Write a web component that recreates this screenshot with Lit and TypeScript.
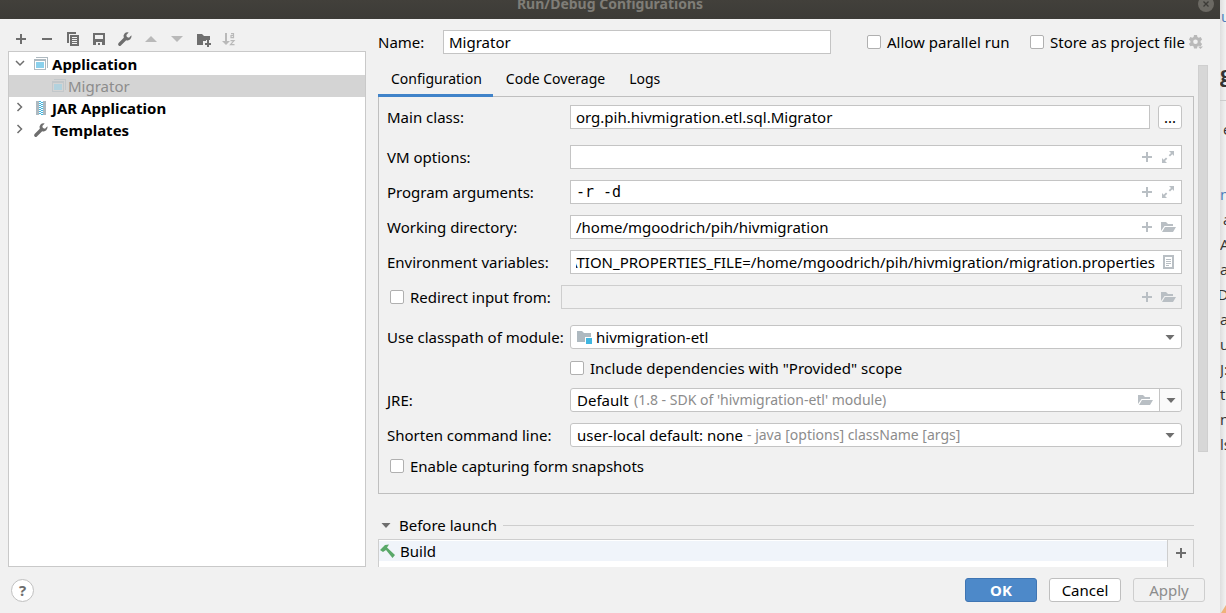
import { LitElement, html, css, svg, nothing } from "lit";
import { customElement, state } from "lit/decorators.js";
import { classMap } from "lit/directives/class-map.js";

const shapes: Record<string, unknown> = {
  add: svg`<path d="M7 3h2v4h4v2H9v4H7V9H3V7h4z"/>`,
  remove: svg`<path d="M3 7h10v2H3z"/>`,
  copy: svg`<path d="M2 1h9v2H4v9H2z"/><path fill-rule="evenodd" d="M5 4h9v11H5zM7 6v1h5V6zM7 8v1h5V8zM7 10v1h5v-1zM7 12v1h5v-1z"/>`,
  save: svg`<path fill-rule="evenodd" d="M2 2h12v12H2zM4 4v4h8V4zM5 11v3h2v-2h2v2h2v-3z"/>`,
  wrench: svg`<path d="M14.4 4.3 12 6.7 9.9 6l-.6-2.1L11.700 1.500A4 4 0 0 0 6.800 6.800L1.600 12.100a1.600 1.600 0 0 0 2.300 2.300L9.200 9.200a4 4 0 0 0 5.200-4.900z"/>`,
  up: svg`<path d="M2 11h12L8 5z"/>`,
  down: svg`<path d="M2 5h12l-6 6z"/>`,
  folderAdd: svg`<path d="M2 3h5l2 2h6v4h-4v1H8v4H2z"/><path d="M12 9h2v3h2v2h-2v2h-2v-2h-2v-2h2z"/>`,
  sort: svg`<path d="M4 2h2v8h3l-4 4-4-4h3z"/><path fill="none" stroke="currentColor" stroke-width="1.200" d="M10 2.600h2.500v4H10V4.500h2.500M9.500 9.600h3.500l-3.500 4h4"/>`,
  expand: svg`<path d="M9 2h5v5l-1.700-1.700-2.300 2.200-1.300-1.300L11 4zM2 9l1.700 1.700L6 8.500l1.300 1.300L5 12l2 2H2z"/>`,
  folder: svg`<path d="M1 3h5l2 2h5v2H4.500L1 12z"/><path d="M5 8h11l-3 5H2z"/>`,
  list: svg`<path fill-rule="evenodd" d="M3 1h11v14H3zM5 3v10h7V3z"/><path d="M6 5h5v1H6zM6 7h5v1H6zM6 9h5v1H6zM6 11h3v1H6z"/>`,
  app: svg`<path fill="#aeb9c0" d="M3 1h12v11h-1V2H3z"/><path fill="#aeb9c0" fill-rule="evenodd" d="M1 3h12v11H1zM2 5v8h10V5z"/><path fill="#8ad0ec" d="M3 6h8v6H3z"/>`,
  jar: svg`<path fill="#aeb9c0" d="M3 1h3v14H3zM10 1h3v14h-3z"/><path stroke="#40b6e0" stroke-width="2" stroke-dasharray="1 1" d="M7 1v14"/><path stroke="#40b6e0" stroke-width="2" stroke-dasharray="1 1" stroke-dashoffset="1" d="M9 1v14"/>`,
  module: svg`<path fill="#aeb9c0" d="M1 2h5l2 2h7v4H9v5H1z"/><path fill="#40b6e0" d="M10 9h6v6h-6z"/>`,
  hammer: svg`<path fill="#59a869" d="M0 7l5-5 4-.5-2 3L15 12l-2.500 3L6 7 3 9z"/>`,
  gear: svg`<path fill-rule="evenodd" d="M5 1h3l.4 2 1.300.8 2-.7 1.400 2.500L11.600 7v1.600l1.500 1.300-1.400 2.400-2-.6-1.300.8L8 14.500H5l-.4-2-1.300-.8-2 .6L-.1 9.900l1.500-1.300V7L-.1 5.600l1.400-2.500 2 .7 1.300-.8zM6.500 5.500a2.300 2.300 0 1 0 0 4.600 2.300 2.300 0 0 0 0-4.600z"/><path d="M9 12.500h5L11.500 15z"/>`,
  arrow: svg`<path d="M3.500 6h9L8 11z"/>`,
  open: svg`<path fill="none" stroke="currentColor" stroke-width="1.500" d="M4 5l4 4 4-4"/>`,
  closed: svg`<path fill="none" stroke="currentColor" stroke-width="1.500" d="M5.500 3l4 4-4 4"/>`,
  close: svg`<circle cx="8" cy="8" r="8" fill="#6b6963"/><path stroke="#3c3b37" stroke-width="1.300" d="M5.500 5.500l5 5M10.500 5.500l-5 5"/>`,
};

const icon = (name: string, cls = "") =>
  html`<svg class="icon ${cls}" viewBox="0 0 16 16" width="16" height="16" fill="currentColor" aria-hidden="true">${shapes[name]}</svg>`;

@customElement("app-root")
export class AppRoot extends LitElement {
  @state() private tab = "Configuration";

  static styles = css`
    :host {
      display: flex;
      height: 100vh;
      overflow: hidden;
      background: #f1f1f1;
      color: #000;
      font: 15px/20px "Noto Sans", sans-serif;
    }
    * { box-sizing: border-box; }
    button, input, select { font: inherit; color: inherit; margin: 0; }
    button { padding: 0; border: 0; background: none; display: flex; align-items: center; justify-content: center; }
    .icon { display: block; flex: none; }
    .dialog { flex: 1; min-width: 0; display: flex; flex-direction: column; }
    .title {
      height: 19px; flex: none; display: grid; grid-template-columns: 28px 1fr 28px;
      background: linear-gradient(#42403b, #3c3b37); color: #7f7d77; overflow: hidden;
    }
    .title h1 { margin: 0; grid-column: 2; text-align: center; font-size: 14px; line-height: 8px; font-weight: 700; }
    .title button { height: 8px; }
    .main { flex: 1; min-height: 0; display: grid; grid-template-columns: 358px minmax(0, 1fr); gap: 12px; padding-left: 8px; }
    .side { display: flex; flex-direction: column; min-height: 0; }
    .tools { display: flex; height: 32px; padding-top: 8px; color: #6e6e6e; }
    .tools button { width: 26px; height: 24px; }
    .tools button:disabled { color: #b9b9b9; }
    .tree { flex: 1; margin: 0; padding: 1px 0; list-style: none; background: #fff; border: 1px solid #c9c9c9; }
    .node { display: flex; align-items: center; height: 22px; padding-left: 3px; font-weight: 700; color: #000; }
    .node .icon { color: #6e6e6e; margin-right: 5px; }
    .node .icon + .icon { margin-right: 3px; }
    .node.child { padding-left: 42px; background: #d4d4d4; color: #8c8c8c; font-weight: 400; }
    .node.child .icon { margin-right: 1px; opacity: 0.45; }
    .editor { display: flex; flex-direction: column; min-width: 0; min-height: 0; }
    .namebar { height: 46px; flex: none; display: grid; grid-template-columns: 65px minmax(0, 1fr) 163px 159px 16px; align-items: center; padding-right: 15px; }
    .namebar .text { margin-right: 36px; }
    .namebar .icon { color: #b9b9b9; }
    .text {
      height: 24px; min-width: 0; background: #fff; border: 1px solid #c4c4c4; padding: 0 5px; outline: none;
    }
    .check { display: flex; align-items: center; gap: 6px; height: 24px; white-space: nowrap; }
    .box { appearance: none; width: 14px; height: 14px; flex: none; background: #fff; border: 1px solid #b0b0b0; border-radius: 2px; }
    .box:checked { background: #4a88c7; }
    .scroll { flex: 1; min-height: 0; display: grid; grid-template-columns: minmax(0, 1fr) 10px; gap: 4px; padding-right: 12px; overflow: hidden; }
    .thumb { height: 387px; background: #d7d7d7; border: 1px solid #cfcfcf; }
    .tabs { display: flex; height: 31px; font-size: 14px; }
    .tabs button { height: 32px; padding: 0 11px 2px 13px; border-bottom: 3px solid transparent; }
    .tabs button.active { border-color: #4083c9; position: relative; }
    .panel { border: 1px solid #bfbfbf; padding: 8px 11px 15px 8px; display: flex; flex-direction: column; }
    .group { display: grid; gap: 11px; margin: 16px 0; }
    .row { display: grid; grid-template-columns: 183px minmax(0, 1fr); align-items: center; white-space: nowrap; }
    .row.narrow { grid-template-columns: 174px minmax(0, 1fr); }
    .row.wide { grid-template-columns: 183px minmax(0, 1fr) 24px; }
    .row.wide .text { margin-right: 8px; }
    .inset { padding-left: 3px; }
    .more { height: 24px; background: #fff; border: 1px solid #c4c4c4; border-radius: 3px; }
    .field { display: flex; align-items: center; height: 24px; background: #fff; border: 1px solid #c4c4c4; padding: 0 5px; color: #b9bfc4; }
    .field input { flex: 1; min-width: 0; height: 22px; padding: 0; border: 0; background: none; outline: none; color: #000; }
    .field input.mono { font: 15px/20px "DejaVu Sans Mono", monospace; }
    .field button { width: 16px; margin-left: 5px; }
    .field.off { background: #f1f1f1; border-color: #cecece; }
    .combo { display: grid; grid-template-columns: minmax(0, 1fr) 22px; align-items: center; height: 24px; background: #fff; border: 1px solid #c4c4c4; border-radius: 3px; color: #6e6e6e; }
    .combo > * { grid-row: 1; }
    .combo select { grid-column: 1 / 3; appearance: none; border: 0; background: none; outline: none; height: 22px; padding: 0 6px; color: #000; }
    .combo.module select { padding-left: 25px; }
    .combo .icon { grid-column: 2; pointer-events: none; margin-left: 3px; }
    .combo .lead { grid-column: 1; margin-left: 5px; }
    .combo .hint { grid-column: 1; font-size: 14px; color: #8c8c8c; pointer-events: none; overflow: hidden; }
    .hint.jre { padding-left: 63px; }
    .hint.cmd { padding-left: 176px; }
    .combo.split { grid-template-columns: minmax(0, 1fr) 22px 22px; }
    .combo.split select { grid-column: 1 / 4; }
    .combo.split .folder { grid-column: 2; color: #b9bfc4; margin-left: 0; }
    .combo.split .drop { grid-column: 3; height: 22px; border-left: 1px solid #c4c4c4; background: #fafafa; pointer-events: none; display: grid; align-items: center; border-radius: 0 3px 3px 0; }
    .combo.split .drop .icon { grid-column: 1; }
    .sub { margin: 7px 0 8px 183px; }
    .shorten { margin: 11px 0 7px; }
    .launch { display: flex; align-items: center; height: 20px; margin: 21px 0 4px; padding: 0; font-size: 15px; font-weight: 400; color: #6e6e6e; }
    .launch span { color: #000; margin: 0 6px 0 5px; }
    .launch hr { flex: 1; border: 0; border-top: 1px solid #cecece; margin: 0; }
    .tasks { display: grid; grid-template-columns: minmax(0, 1fr) 25px; height: 90px; border: 1px solid #cecece; }
    .tasks ul { margin: 0; padding: 1px 0; list-style: none; background: #fff; border-right: 1px solid #cecece; }
    .tasks li { display: flex; align-items: center; gap: 4px; height: 20px; padding-left: 1px; background: #f0f4fa; }
    .tasks button { height: 26px; color: #6e6e6e; }
    .footer { height: 46px; flex: none; display: flex; align-items: center; gap: 12px; padding: 0 15px 0 11px; }
    .footer .help { width: 23px; height: 23px; margin-right: auto; border: 1px solid #c0c0c0; border-radius: 50%; background: #fff; color: #6e6e6e; font-weight: 700; }
    .action { width: 72px; height: 24px; border: 1px solid #bfbfbf; border-radius: 3px; background: #fff; }
    .action.primary { background: #4d89c9; border-color: #3f75b3; color: #fff; font-weight: 700; }
    .action:disabled { background: #f1f1f1; border-color: #cecece; color: #8c8c8c; }
    .behind {
      width: 6px; flex: none; overflow: hidden; background: linear-gradient(90deg, #dedede, #f2f2f2);
      color: #333; font: 15px/25px "Open Sans", sans-serif; white-space: nowrap; display: flex; flex-direction: column;
    }
    .behind p { margin: 0; }
    .behind .link { color: #4a7ebb; }
    .behind .first { padding: 4px 0 0 1px; }
    .behind .big { font-size: 22px; font-weight: 700; margin-top: 32px; border-bottom: 1px solid #ccc; height: 40px; }
    .behind .gap { padding: 16px 0 40px 3px; }
    .behind .corner { width: 6px; height: 8px; margin-top: auto; display: block; }
    .behind .in { padding-left: 3px; }
    .behind .cut { display: flex; justify-content: center; }
  `;

  firstUpdated() {
    const env = this.renderRoot.querySelector<HTMLInputElement>("#env");
    if (env) env.scrollLeft = env.scrollWidth;
  }

  private tool(name: string, label: string, disabled = false) {
    return html`<button aria-label=${label} ?disabled=${disabled}>${icon(name)}</button>`;
  }

  private check(label: string, cls = "") {
    return html`<label class="check ${cls}"><input class="box" type="checkbox" />${label}</label>`;
  }

  private field(id: string, value: string, icons: string[], opts: { mono?: boolean; off?: boolean; label?: string } = {}) {
    return html`<div class=${classMap({ field: true, off: !!opts.off })}>
      <input id=${id} class=${opts.mono ? "mono" : ""} .value=${value} ?disabled=${!!opts.off} aria-label=${opts.label ?? nothing} />
      ${icons.map((n) => html`<button aria-label=${n}>${icon(n)}</button>`)}
    </div>`;
  }

  render() {
    return html`
      <div class="dialog">
        <header class="title">
          <h1>Run/Debug Configurations</h1>
          <button aria-label="Close">${icon("close")}</button>
        </header>
        <div class="main">
          <aside class="side">
            <div class="tools">
              ${this.tool("add", "Add")}${this.tool("remove", "Remove")}${this.tool("copy", "Copy")}
              ${this.tool("save", "Save")}${this.tool("wrench", "Edit templates")}
              ${this.tool("up", "Move up", true)}${this.tool("down", "Move down", true)}
              ${this.tool("folderAdd", "New folder")}${this.tool("sort", "Sort", true)}
            </div>
            <ul class="tree">
              <li class="node">${icon("open")}${icon("app")}<span>Application</span></li>
              <li class="node child">${icon("app")}<span>Migrator</span></li>
              <li class="node">${icon("closed")}${icon("jar")}<span>JAR Application</span></li>
              <li class="node">${icon("closed")}${icon("wrench")}<span>Templates</span></li>
            </ul>
          </aside>
          <section class="editor">
            <div class="namebar">
              <label for="name">Name:</label>
              <input id="name" class="text" .value=${"Migrator"} />
              ${this.check("Allow parallel run")}${this.check("Store as project file")}${icon("gear")}
            </div>
            <div class="scroll">
              <div>
                <nav class="tabs">
                  ${["Configuration", "Code Coverage", "Logs"].map(
                    (t) => html`<button class=${classMap({ active: t === this.tab })} @click=${() => (this.tab = t)}>${t}</button>`
                  )}
                </nav>
                <div class="panel">
                  <div class="row wide">
                    <label for="main">Main class:</label>
                    <input id="main" class="text" .value=${"org.pih.hivmigration.etl.sql.Migrator"} />
                    <button class="more" aria-label="Browse">...</button>
                  </div>
                  <div class="group">
                    <div class="row"><label for="vm">VM options:</label>${this.field("vm", "", ["add", "expand"])}</div>
                    <div class="row"><label for="args">Program arguments:</label>${this.field("args", "-r -d", ["add", "expand"], { mono: true })}</div>
                    <div class="row"><label for="dir">Working directory:</label>${this.field("dir", "/home/mgoodrich/pih/hivmigration", ["add", "folder"])}</div>
                    <div class="row"><label for="env">Environment variables:</label>${this.field("env", "MIGRATION_PROPERTIES_FILE=/home/mgoodrich/pih/hivmigration/migration.properties", ["list"])}</div>
                    <div class="row narrow">${this.check("Redirect input from:", "inset")}${this.field("input", "", ["add", "folder"], { off: true, label: "Input file" })}</div>
                  </div>
                  <div class="row">
                    <label for="module">Use classpath of module:</label>
                    <div class="combo module">
                      ${icon("module", "lead")}
                      <select id="module"><option>hivmigration-etl</option></select>
                      ${icon("arrow")}
                    </div>
                  </div>
                  ${this.check('Include dependencies with "Provided" scope', "sub")}
                  <div class="row">
                    <label for="jre">JRE:</label>
                    <div class="combo split">
                      <select id="jre"><option>Default</option></select>
                      <span class="hint jre">(1.8 - SDK of 'hivmigration-etl' module)</span>
                      ${icon("folder", "folder")}
                      <span class="drop">${icon("arrow")}</span>
                    </div>
                  </div>
                  <div class="row shorten">
                    <label for="cmd">Shorten command line:</label>
                    <div class="combo">
                      <select id="cmd"><option>user-local default: none</option></select>
                      <span class="hint cmd">- java [options] className [args]</span>
                      ${icon("arrow")}
                    </div>
                  </div>
                  ${this.check("Enable capturing form snapshots", "inset")}
                </div>
                <h2 class="launch">${icon("arrow")}<span>Before launch</span><hr /></h2>
                <div class="tasks">
                  <ul><li>${icon("hammer")}Build</li></ul>
                  <button aria-label="Add task">${icon("add")}</button>
                </div>
              </div>
              <div class="thumb"></div>
            </div>
          </section>
        </div>
        <footer class="footer">
          <button class="help" aria-label="Help">?</button>
          <button class="action primary">OK</button>
          <button class="action">Cancel</button>
          <button class="action" disabled>Apply</button>
        </footer>
      </div>
      <div class="behind">
        <p class="link first">u</p>
        <p class="big">g</p>
        <p class="gap">e</p>
        <p class="link">n</p>
        <p class="in">a</p>
        <p>A</p><p>ar</p><p class="cut">D</p><p>ar</p><p>ur</p><p>J:</p><p>tu</p><p>n</p><p>ls</p>
        <svg class="corner" viewBox="0 0 6 8"><path fill="#f0b27a" d="M6 0v8H1z" /></svg>
      </div>
    `;
  }
}
